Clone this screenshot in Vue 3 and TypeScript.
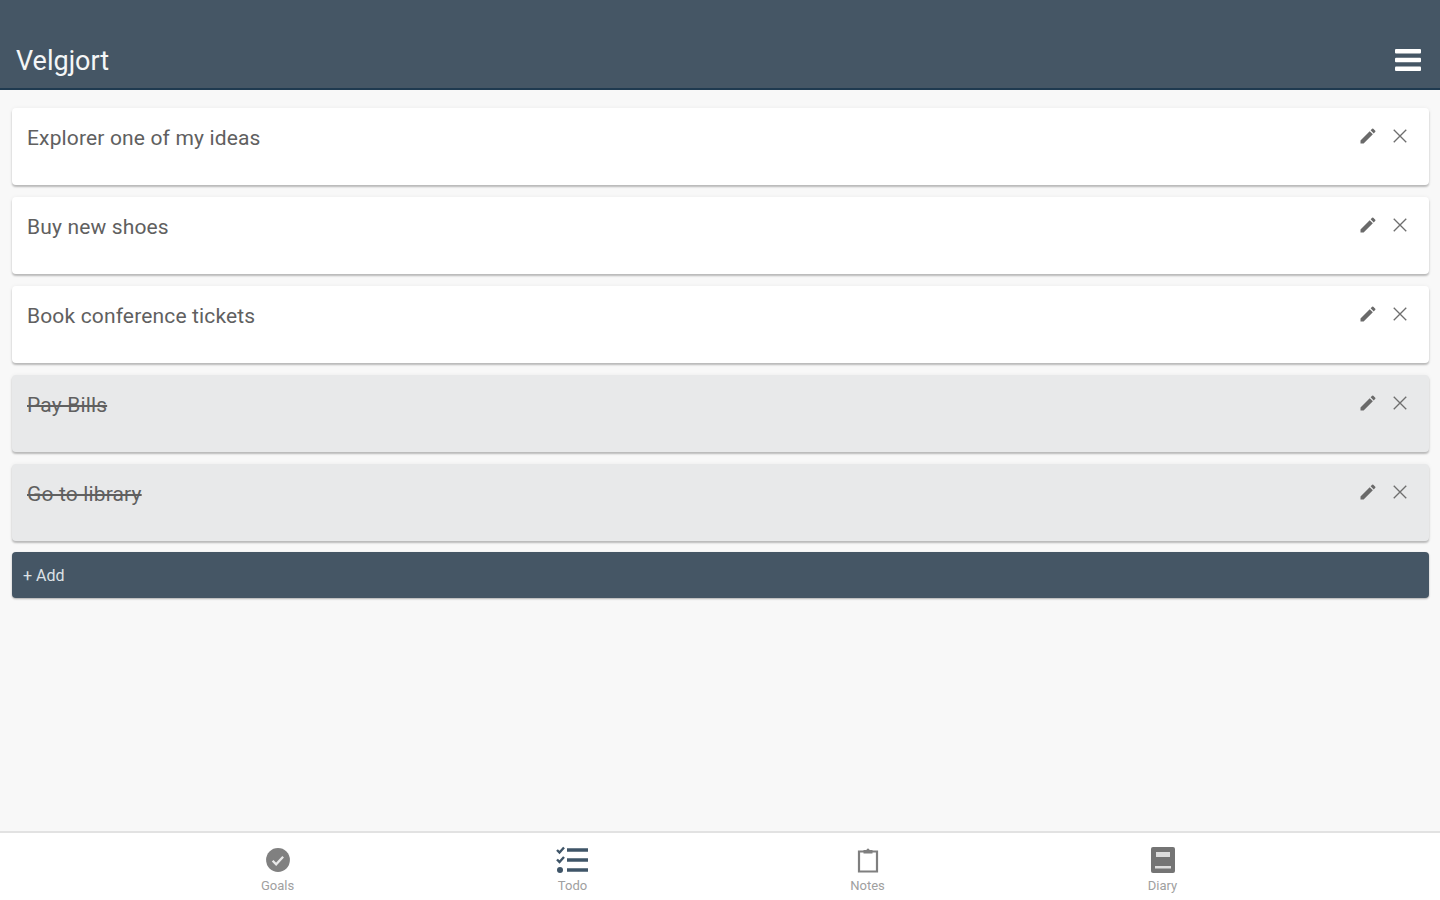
<template>
  <div class="page">
    <header class="toolbar">
      <span class="title">Velgjort</span>
      <svg class="menu" viewBox="0 0 26 24" width="26" height="24" aria-hidden="true">
        <rect x="0" y="1" width="26" height="4.4" rx="1" />
        <rect x="0" y="9.8" width="26" height="4.4" rx="1" />
        <rect x="0" y="18.6" width="26" height="4.4" rx="1" />
      </svg>
    </header>

    <main class="content">
      <div v-for="todo in todos" :key="todo.text" class="card" :class="{ done: todo.done }">
        <span class="text">{{ todo.text }}</span>
        <div class="actions">
          <svg viewBox="0 0 24 24" width="20" height="20" class="edit" aria-hidden="true">
            <path d="M3 17.25V21h3.75L17.81 9.94l-3.75-3.75L3 17.25zM20.71 7.04a1 1 0 0 0 0-1.41l-2.34-2.34a1 1 0 0 0-1.41 0l-1.83 1.83 3.75 3.75 1.83-1.83z" />
          </svg>
          <svg viewBox="0 0 24 24" width="20" height="20" class="close" aria-hidden="true">
            <path d="M4.5 4.5l15 15M19.5 4.5l-15 15" />
          </svg>
        </div>
      </div>
      <button class="add" type="button">+ Add</button>
    </main>

    <nav class="tabs">
      <div v-for="tab in tabs" :key="tab" class="tab">
        <svg v-if="tab === 'Goals'" viewBox="0 0 24 24" width="28" height="28" class="tab-icon" aria-hidden="true">
          <circle cx="12" cy="12" r="10.2" fill="#808080" />
          <path d="M7.4 12.6l3 3 6-6.4" fill="none" stroke="#e8e8e8" stroke-width="2" />
        </svg>
        <svg v-else-if="tab === 'Todo'" viewBox="0 0 36 30" width="36" height="30" class="tab-icon" aria-hidden="true">
          <g fill="none" stroke="#3f5568">
            <path d="M2 5l2.5 2.5L9 2.5M2 14.500l2.500 2.500L9 12" stroke-width="2.400" />
            <path d="M12 5h21M12 15h21M12 25h21" stroke-width="3.400" />
          </g>
          <circle cx="5" cy="25" r="3" fill="#3f5568" />
        </svg>
        <svg v-else-if="tab === 'Notes'" viewBox="0 0 24 28" width="24" height="28" class="tab-icon" aria-hidden="true">
          <path d="M3 5.500h18v20H3z" fill="none" stroke="#7f7f7f" stroke-width="2.200" />
          <path d="M7.500 7.500V4h3a1.500 1.500 0 0 1 3 0h3v3.500z" fill="#7f7f7f" />
        </svg>
        <svg v-else viewBox="0 0 26 28" width="26" height="28" class="tab-icon" aria-hidden="true">
          <path d="M3 1h20a2 2 0 0 1 2 2v22a2 2 0 0 1-2 2H3a2 2 0 0 1-2-2V3a2 2 0 0 1 2-2z" fill="#747474" />
          <path d="M6 6h14v5H6zM5 20h16v2.500H5z" fill="#dcdcdc" />
        </svg>
        <span class="tab-label">{{ tab }}</span>
      </div>
    </nav>
  </div>
</template>

<script setup lang="ts">
const todos = [
  { text: 'Explorer one of my ideas', done: false },
  { text: 'Buy new shoes', done: false },
  { text: 'Book conference tickets', done: false },
  { text: 'Pay Bills', done: true },
  { text: 'Go to library', done: true },
]

const tabs = ['Goals', 'Todo', 'Notes', 'Diary']
</script>

<style>
html,
body {
  margin: 0;
  background: #f8f8f8;
}
</style>

<style scoped>
.page {
  display: flex;
  flex-direction: column;
  height: 900px;
  overflow: hidden;
  font-family: Roboto, "Noto Sans", sans-serif;
  background: #f8f8f8;
}

.toolbar {
  height: 88px;
  flex: none;
  display: flex;
  align-items: flex-end;
  justify-content: space-between;
  padding: 0 19px 13px 16px;
  box-sizing: border-box;
  background: #455665;
  border-bottom: 2px solid #1f3a50;
  height: 90px;
}

.title {
  font-size: 27px;
  line-height: 32px;
  margin-bottom: -2px;
  color: #f4f6f7;
}

.menu {
  fill: #fff;
  margin-bottom: 3px;
}

.content {
  flex: 1;
  display: flex;
  flex-direction: column;
  gap: 12px;
  padding: 18px 11px 0 12px;
}

.card {
  height: 77px;
  box-sizing: border-box;
  display: flex;
  justify-content: space-between;
  align-items: flex-start;
  padding: 16px 20px 0 15px;
  background: #fff;
  border-radius: 4px;
  box-shadow: 0 2px 2px rgba(0, 0, 0, 0.24), 0 0 4px rgba(0, 0, 0, 0.05);
}

.card.done {
  background: #e8e9ea;
}

.text {
  font-size: 21px;
  line-height: 28px;
  letter-spacing: 0.15px;
  color: #606060;
}

.done .text {
  text-decoration: line-through;
}

.actions {
  display: flex;
  gap: 12px;
  margin-top: 2px;
  transform: translateX(1px);
}

.edit {
  fill: #6a6a6a;
}

.close {
  fill: none;
  stroke: #6e6e6e;
  stroke-width: 1.6;
}

.add {
  height: 46px;
  margin-top: -1px;
  padding: 0 11px;
  border: none;
  border-radius: 4px;
  text-align: left;
  font-family: inherit;
  font-size: 16px;
  color: #dde2e6;
  background: #455665;
  box-shadow: 0 1px 2px rgba(0, 0, 0, 0.3);
}

.tabs {
  height: 69px;
  flex: none;
  box-sizing: border-box;
  display: flex;
  justify-content: center;
  background: #fff;
  border-top: 2px solid #e2e2e2;
}

.tab {
  width: 295px;
  display: flex;
  flex-direction: column;
  align-items: center;
  padding-top: 12px;
}

.tab-icon {
  height: 30px;
  flex: none;
}

.tab-label {
  margin-top: 4px;
  font-size: 13px;
  line-height: 14px;
  color: #a0a0a0;
}
</style>
